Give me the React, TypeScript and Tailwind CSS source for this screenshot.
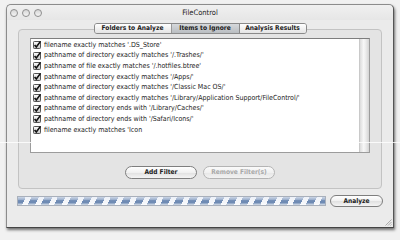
const rows = [
  "filename exactly matches '.DS_Store'",
  "pathname of directory exactly matches '/.Trashes/'",
  "pathname of file exactly matches '/.hotfiles.btree'",
  "pathname of directory exactly matches '/Apps/'",
  "pathname of directory exactly matches '/Classic Mac OS/'",
  "pathname of directory exactly matches '/Library/Application Support/FileControl/'",
  "pathname of directory ends with '/Library/Caches/'",
  "pathname of directory ends with '/Safari/Icons/'",
  "filename exactly matches 'Icon",
];

function Check() {
  return (
    <svg width="8" height="8" viewBox="0 0 8 8" className="shrink-0">
      <defs>
        <linearGradient id="cbg" x1="0" y1="0" x2="0" y2="1">
          <stop offset="0" stopColor="#ffffff" />
          <stop offset="1" stopColor="#c4c4c4" />
        </linearGradient>
      </defs>
      <rect x="0.5" y="0.5" width="7" height="7" rx="0.8" fill="url(#cbg)" stroke="#555" strokeWidth="1" />
      <path d="M1.6 3.9 L3.3 5.9 L7.6 0.2" fill="none" stroke="#111" strokeWidth="1.6" />
    </svg>
  );
}

function Light() {
  return (
    <div className="w-[8px] h-[8px] rounded-full border border-[#8e8e8e] bg-[linear-gradient(to_bottom,#d6d6d6,#f4f4f4)]" />
  );
}

export default function App() {
  return (
    <div className="relative w-[400px] h-[240px] bg-[#f1f1f1] overflow-hidden font-['DejaVu_Sans_Condensed','DejaVu_Sans','Liberation_Sans',sans-serif] text-[#1c1c1c]">
      <div className="relative ml-[6px] mt-[4px] w-[388px] h-[224px] bg-[#ebebeb] rounded-t-[5px] border border-[#8c8c8c] border-r-[#555] border-b-[#444] shadow-[1px_2px_3px_rgba(0,0,0,0.55)] flex flex-col">
        {/* title bar */}
        <div className="relative h-[15px] shrink-0 flex items-center pl-[3px] gap-[4px] rounded-t-[5px] bg-[linear-gradient(to_bottom,#f0f0f0,#e6e6e6)]">
          <Light />
          <Light />
          <Light />
          <div className="absolute inset-0 flex items-center justify-center text-[7.5px] text-[#222] leading-none pt-[1px]">
            FileControl
          </div>
        </div>

        {/* tab pane */}
        <div className="mt-[3px] px-[11px] flex flex-col">
          <div className="relative z-10 h-[11px] flex justify-center">
            <div className="flex h-[11px] border border-[#8a8a8a] rounded-[3px] overflow-hidden text-[6.6px] font-bold leading-none">
              <div className="w-[77px] flex items-center justify-center bg-[linear-gradient(to_bottom,#ffffff,#e4e4e4)] border-r border-[#9a9a9a]">
                Folders to Analyze
              </div>
              <div className="w-[68px] flex items-center justify-center bg-[linear-gradient(to_bottom,#d6d9dc,#b9bdc1)] border-r border-[#8a8a8a]">
                Items to Ignore
              </div>
              <div className="w-[66px] flex items-center justify-center bg-[linear-gradient(to_bottom,#ffffff,#e4e4e4)]">
                Analysis Results
              </div>
            </div>
          </div>
          <div className="-mt-[5px] h-[160px] border border-[#c3c3c3] rounded-[4px] bg-[#e4e4e4] pt-[8px] px-[11px] flex flex-col">
            <div className="h-[115px] flex border border-[#9c9c9c] border-t-[#7d7d7d] bg-white">
              <div className="flex-1 pt-[1px] pl-[2px] flex flex-col">
                {rows.map((r) => (
                  <div key={r} className="h-[10.6px] flex items-center gap-[3px] text-[7px] leading-none whitespace-nowrap text-[#222]">
                    <Check />
                    <span>{r}</span>
                  </div>
                ))}
              </div>
              <div className="w-[10px] border-l border-[#c9c9c9] bg-[linear-gradient(to_right,#dcdcdc,#f7f7f7_40%,#eeeeee_60%,#d4d4d4)]" />
            </div>
            <div className="mt-[13px] flex justify-center gap-[6px]">
              <div className="w-[72px] h-[13px] rounded-full border border-[#7e7e7e] bg-[linear-gradient(to_bottom,#ffffff,#f0f0f0_50%,#e0e0e0_51%,#f4f4f4)] flex items-center justify-center text-[6.6px] font-bold leading-none text-[#222]">
                Add Filter
              </div>
              <div className="w-[72px] h-[13px] rounded-full border border-[#b4b4b4] bg-[linear-gradient(to_bottom,#fafafa,#f0f0f0_50%,#e6e6e6_51%,#f2f2f2)] flex items-center justify-center text-[6.6px] font-bold leading-none text-[#a8a8a8]">
                Remove Filter(s)
              </div>
            </div>
          </div>
        </div>

        {/* bottom row */}
        <div className="mt-[6px] px-[10px] h-[12px] flex items-center gap-[4px]">
          <div className="w-[309px] h-[10px] border border-[#a9b0bb] bg-[linear-gradient(to_bottom,rgba(235,240,248,0.75),rgba(235,240,248,0.35)_35%,rgba(255,255,255,0)_45%,rgba(255,255,255,0)_70%,rgba(255,255,255,0.75)),repeating-linear-gradient(115deg,#6f8bb4_0px,#6f8bb4_7px,#f4f6fa_7px,#f4f6fa_12px)]" />
          <div className="w-[53px] h-[12px] rounded-full border border-[#7e7e7e] bg-[linear-gradient(to_bottom,#ffffff,#f0f0f0_50%,#e0e0e0_51%,#f4f4f4)] flex items-center justify-center text-[6.6px] font-bold leading-none text-[#222]">
            Analyze
          </div>
        </div>

        {/* resize grip */}
        <svg className="absolute right-[1px] bottom-[1px]" width="8" height="8" viewBox="0 0 8 8">
          <path d="M7.5 1.5 L1.5 7.5 M7.5 4 L4 7.5 M7.5 6.5 L6.5 7.5" stroke="#9a9a9a" strokeWidth="0.8" />
        </svg>
      </div>

      {/* stray horizontal line across */}
      <div className="absolute left-0 right-0 top-[142px] h-px bg-white/80" />
    </div>
  );
}
